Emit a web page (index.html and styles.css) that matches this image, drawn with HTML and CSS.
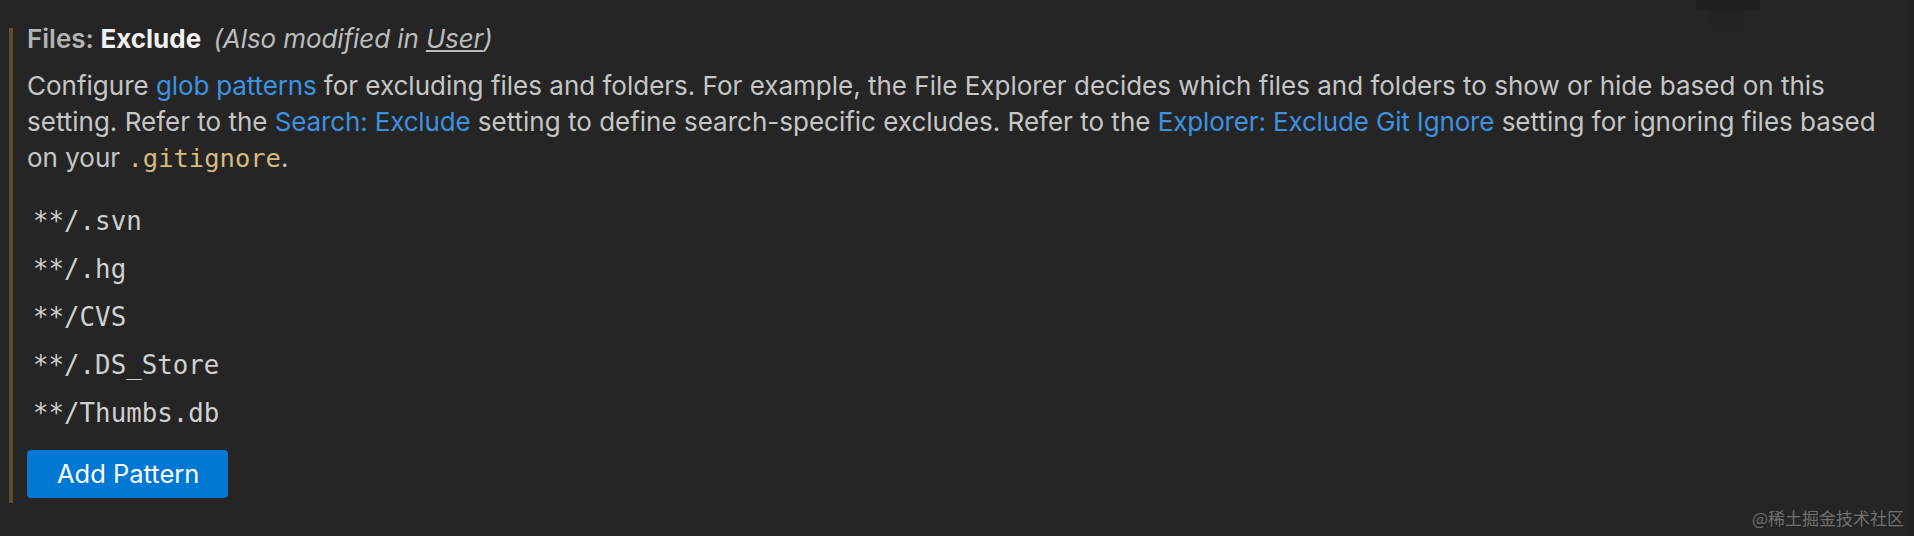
FILE: index.html
```html
<!DOCTYPE html>
<html lang="en">
<head>
<meta charset="utf-8">
<title>Files: Exclude</title>
<link rel="stylesheet" href="styles.css">
</head>
<body>
<div class="page">
  <div class="ghost"><div class="ghost-inner"></div></div>
  <section class="setting">
    <div class="title">
      <span class="category">Files: </span><span class="label">Exclude</span>
      <span class="overrides">(Also modified in <u>User</u>)</span>
    </div>
    <div class="desc">Configure <a class="link">glob patterns</a> for excluding files and folders. For example, the File Explorer decides which files and folders to show or hide based on this setting. Refer to the <a class="link">Search: Exclude</a> setting to define search-specific excludes. Refer to the <a class="link">Explorer: Exclude Git Ignore</a> setting for ignoring files based on your <code class="code">.gitignore</code>.</div>
    <ul class="list">
      <li class="row">**/.svn</li>
      <li class="row">**/.hg</li>
      <li class="row">**/CVS</li>
      <li class="row">**/.DS_Store</li>
      <li class="row">**/Thumbs.db</li>
    </ul>
    <button class="btn">Add Pattern</button>
  </section>
  <div class="scroll-edge"></div>
  <div class="watermark">@稀土掘金技术社区</div>
</div>
</body>
</html>
```
FILE: styles.css
```css
html, body {
  margin: 0;
  padding: 0;
  background: #252525;
}
body {
  width: 1914px;
  height: 536px;
  overflow: hidden;
  font-family: Inter, "Noto Sans", sans-serif;
}
.page {
  position: relative;
  width: 1914px;
  height: 536px;
  padding-top: 28px;
  box-sizing: border-box;
}
.setting {
  margin-left: 9px;
  margin-right: 4px;
  border-left: 4px solid #5e4e2b;
  padding: 0 0 5px 14px;
}
.title {
  font-size: 26px;
  line-height: 22px;
  height: 22px;
  white-space: nowrap;
}
.category {
  color: #b4b4b4;
  font-weight: 600;
}
.label {
  color: #f2f2f2;
  font-weight: 700;
}
.overrides {
  color: #bcbcbc;
  font-style: italic;
  margin-left: 5px;
  letter-spacing: -0.1px;
}
.desc {
  margin-top: 18px;
  font-size: 26px;
  line-height: 36px;
  color: #c6c6c6;
}
.link {
  color: #3d92e0;
  text-decoration: none;
  letter-spacing: -0.15px;
}
.code {
  font-family: "DejaVu Sans Mono", monospace;
  font-size: 25.5px;
  color: #d8ba7c;
}
.list {
  list-style: none;
  margin: 21px 0 0 0;
  padding: 0;
}
.row {
  height: 48px;
  line-height: 48px;
  padding-left: 6px;
  font-family: "DejaVu Sans Mono", monospace;
  font-size: 25.8px;
  color: #d0d0d0;
}
.btn {
  display: block;
  margin-top: 13px;
  height: 48px;
  padding: 0 29px 0 30px;
  border: none;
  border-radius: 4px;
  background: #0078d4;
  color: #ffffff;
  font-family: Inter, "Noto Sans", sans-serif;
  font-size: 25.5px;
  line-height: 48px;
}
.ghost {
  position: absolute;
  left: 1696px;
  top: 0;
  width: 64px;
  height: 10px;
  background: #202020;
  filter: blur(1px);
}
.ghost-inner {
  position: absolute;
  left: 14px;
  top: 10px;
  width: 33px;
  height: 15px;
  background: #222222;
}
.scroll-edge {
  position: absolute;
  right: 0;
  top: 0;
  width: 10px;
  height: 536px;
  background: linear-gradient(to right, #252525, #212121);
}
.watermark {
  position: absolute;
  right: 10px;
  bottom: 8px;
  font-family: "Noto Sans CJK SC", sans-serif;
  font-size: 17px;
  line-height: 20px;
  color: #707070;
}
```
